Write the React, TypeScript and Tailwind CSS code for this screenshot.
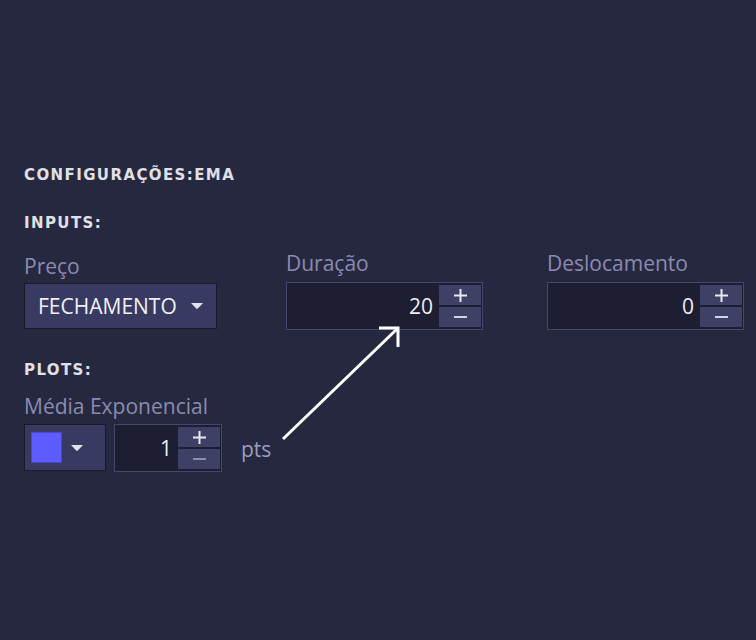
import React from 'react';

const font = { fontFamily: '"Open Sans", "Noto Sans", sans-serif' };
const headFont = { fontFamily: '"DejaVu Sans", Verdana, sans-serif' };

const Caret = () => (
  <svg width="12" height="6" viewBox="0 0 12 6" className="shrink-0">
    <path d="M0 0 L12 0 L6.8 5.6 Q6 6.2 5.2 5.6 Z" fill="#e2e2ec" />
  </svg>
);

const Plus = () => (
  <svg width="13" height="13" viewBox="0 0 13 13">
    <path d="M6.5 0 V13 M0 6.5 H13" stroke="#e8e8f0" strokeWidth="2" />
  </svg>
);

const Minus = ({ dim }: { dim?: boolean }) => (
  <svg width="13" height="2" viewBox="0 0 13 2">
    <path d="M0 1 H13" stroke={dim ? '#8c8cab' : '#d4d4e0'} strokeWidth="2" />
  </svg>
);

const Stepper = ({ value, width, dimMinus }: { value: string; width: string; dimMinus?: boolean }) => (
  <div className={`flex h-[48px] ${width} border border-[#45476f] bg-[#1d1e31] p-[2px] pr-px`}>
    <div className="flex flex-1 items-center justify-end pr-[6px] text-[21px] leading-none text-[#ededf3]">{value}</div>
    <div className="flex w-[42px] flex-col gap-[2px]">
      <button className="flex h-[20px] items-center justify-center bg-[#3f4066]">
        <Plus />
      </button>
      <button className="flex h-[20px] items-center justify-center bg-[#3f4066]">
        <Minus dim={dimMinus} />
      </button>
    </div>
  </div>
);

const Label = ({ children, className = '' }: { children: React.ReactNode; className?: string }) => (
  <div className={`text-[21px] leading-[28px] text-[#8b8bb0] ${className}`}>{children}</div>
);

const Heading = ({ children, className = '' }: { children: React.ReactNode; className?: string }) => (
  <div style={headFont} className={`text-[15px] font-bold leading-[18px] tracking-[1.4px] text-[#e0e0e6] ${className}`}>
    {children}
  </div>
);

export default function App() {
  return (
    <div style={font} className="relative min-h-[640px] w-[756px] overflow-hidden bg-[#262840] pl-[24px] pt-[166px]">
      <Heading>CONFIGURAÇÕES:EMA</Heading>
      <Heading className="mt-[30px]">INPUTS:</Heading>

      <div className="mt-[17px] flex items-start">
        <div className="w-[262px] pt-[3px]">
          <Label>Preço</Label>
          <button className="mt-[3px] flex h-[46px] w-[193px] items-center gap-[14px] border border-[#181928] bg-[#393a61] pl-[13px] text-[21px] leading-none text-[#f0f0f6]">
            FECHAMENTO
            <Caret />
          </button>
        </div>
        <div className="w-[261px]">
          <Label>Duração</Label>
          <div className="mt-[5px]">
            <Stepper value="20" width="w-[197px]" />
          </div>
        </div>
        <div>
          <Label>Deslocamento</Label>
          <div className="mt-[5px]">
            <Stepper value="0" width="w-[197px]" />
          </div>
        </div>
      </div>

      <Heading className="mt-[31px]">PLOTS:</Heading>
      <Label className="mt-[13px]">Média Exponencial</Label>
      <div className="mt-[4px] flex items-start">
        <button className="flex h-[47px] w-[82px] items-center gap-[9px] border border-[#181928] bg-[#393a61] pl-[6px]">
          <span className="h-[31px] w-[31px] border border-[#4848c8] bg-[#5c5cff]" />
          <Caret />
        </button>
        <div className="ml-[8px]">
          <Stepper value="1" width="w-[108px]" dimMinus />
        </div>
        <span className="ml-[19px] mt-[11px] text-[21px] leading-[28px] text-[#9c9cbc]">pts</span>
      </div>

      <svg className="pointer-events-none absolute left-0 top-0" width="756" height="640">
        <line x1="283" y1="439" x2="397" y2="329" stroke="#ffffff" strokeWidth="3" />
        <polyline points="379,328 398,328 398,347" fill="none" stroke="#ffffff" strokeWidth="3" />
      </svg>
    </div>
  );
}
